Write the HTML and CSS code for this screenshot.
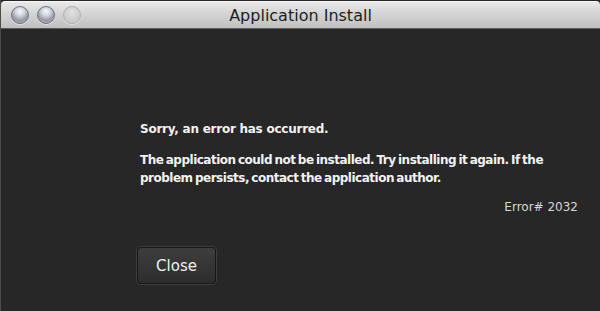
FILE: index.html
```html
<!DOCTYPE html>
<html>
<head>
<meta charset="utf-8">
<link rel="stylesheet" href="styles.css">
</head>
<body>
<div class="window">
  <div class="titlebar">
    <div class="lights">
      <span class="light"></span>
      <span class="light"></span>
      <span class="light dim"></span>
    </div>
    <div class="title">Application Install</div>
  </div>
  <div class="content">
    <h1 class="heading">Sorry, an error has occurred.</h1>
    <p class="message">The application could not be installed. Try installing it again. If the problem persists, contact the application author.</p>
    <div class="code">Error# 2032</div>
    <div class="actions">
      <button class="btn">Close</button>
    </div>
  </div>
</div>
</body>
</html>
```

FILE: styles.css
```css
html, body {
  margin: 0;
  padding: 0;
  background: #272727;
  width: 600px;
  height: 311px;
  overflow: hidden;
}
.window {
  box-sizing: border-box;
  height: 311px;
  padding-top: 1px;
  border-left: 1px solid #4a4a4a;
  display: flex;
  flex-direction: column;
}
.titlebar {
  height: 28px;
  flex: none;
  position: relative;
  background: linear-gradient(#e8e8e8 0%, #d6d6d6 40%, #c0c0c0 100%);
  border-top: 1px solid #f6f6f6;
  border-bottom: 1px solid #5a5a5a;
  box-sizing: border-box;
  border-radius: 4px 4px 0 0;
  display: flex;
  align-items: center;
  justify-content: center;
}
.lights {
  position: absolute;
  left: 10px;
  top: 4px;
  display: flex;
  gap: 8px;
}
.light {
  width: 18px;
  height: 18px;
  border-radius: 50%;
  box-sizing: border-box;
  border: 1px solid #6f737c;
  background: radial-gradient(circle at 50% 28%, #f6f8fc 0%, #d2d6de 30%, #9297a2 65%, #c4c8d0 100%);
  box-shadow: 0 1px 0 rgba(255,255,255,0.5);
}
.light.dim {
  border-color: #b0b0b0;
  background: radial-gradient(circle at 50% 35%, #e2e2e2 0%, #d0d0d0 50%, #c4c4c4 100%);
}
.title {
  font-family: "DejaVu Sans", "Liberation Sans", sans-serif;
  font-size: 16px;
  color: #1e1e1e;
  margin-top: 1px;
}
.content {
  flex: 1;
  padding: 92px 22px 0 139px;
  color: #f2f2f2;
  font-family: "DejaVu Sans", "Liberation Sans", sans-serif;
  font-weight: bold;
  font-size: 12px;
  letter-spacing: -0.25px;
}
.heading {
  margin: 0;
  font-size: 12px;
  line-height: 16px;
}
.message {
  margin: 14px 0 0;
  line-height: 18px;
  width: 420px;
  letter-spacing: -0.5px;
  word-spacing: -1.3px;
}
.code {
  margin-top: 13px;
  text-align: right;
  font-weight: normal;
  color: #d8d8d8;
  letter-spacing: 0;
}
.actions {
  margin-top: 33px;
  margin-left: -3px;
}
.btn {
  width: 79px;
  height: 37px;
  border-radius: 4px;
  border: 1px solid #161616;
  box-shadow: 0 0 0 1px #3e3e3e;
  background: linear-gradient(#3e3e3e, #323232 70%, #2c2c2c);
  color: #f0f0f0;
  font-family: "DejaVu Sans", "Liberation Sans", sans-serif;
  font-size: 15px;
  padding: 0;
}
```
